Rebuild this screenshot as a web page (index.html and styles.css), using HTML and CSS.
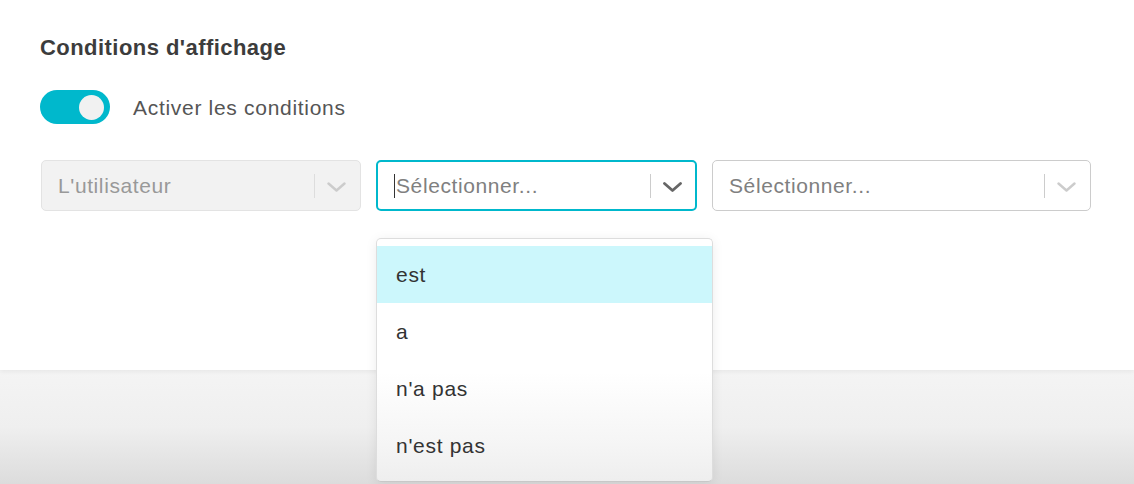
FILE: index.html
```html
<!DOCTYPE html>
<html lang="fr">
<head>
<meta charset="utf-8">
<title>Conditions d'affichage</title>
<link rel="stylesheet" href="styles.css">
</head>
<body>
<div class="panel">
  <h2 class="title">Conditions d'affichage</h2>
  <div class="toggle-row">
    <span class="toggle"><span class="knob"></span></span>
    <span class="toggle-label">Activer les conditions</span>
  </div>
  <div class="selects">
    <div class="select disabled">
      <span class="value">L'utilisateur</span>
      <span class="sep"></span>
      <span class="chev"><svg width="19" height="10" viewBox="0 0 19 10"><polyline points="1.5,1.5 9.5,8.5 17.5,1.5" fill="none" stroke="currentColor" stroke-width="2.4" stroke-linecap="round" stroke-linejoin="round"/></svg></span>
    </div>
    <div class="select-wrap">
      <div class="select focused">
        <span class="value"><span class="caret"></span>Sélectionner...</span>
        <span class="sep"></span>
        <span class="chev"><svg width="19" height="10" viewBox="0 0 19 10"><polyline points="1.5,1.5 9.5,8.5 17.5,1.5" fill="none" stroke="currentColor" stroke-width="2.8" stroke-linecap="round" stroke-linejoin="round"/></svg></span>
      </div>
      <div class="menu">
        <div class="option active">est</div>
        <div class="option">a</div>
        <div class="option">n'a pas</div>
        <div class="option">n'est pas</div>
      </div>
    </div>
    <div class="select">
      <span class="value">Sélectionner...</span>
      <span class="sep"></span>
      <span class="chev"><svg width="19" height="10" viewBox="0 0 19 10"><polyline points="1.5,1.5 9.5,8.5 17.5,1.5" fill="none" stroke="currentColor" stroke-width="2.4" stroke-linecap="round" stroke-linejoin="round"/></svg></span>
    </div>
  </div>
</div>
<div class="footer"></div>
</body>
</html>
```
FILE: styles.css
```css
* { box-sizing: border-box; }
html, body {
  margin: 0;
  padding: 0;
  width: 1134px;
  height: 484px;
  overflow: hidden;
  background: #ffffff;
  font-family: "Liberation Sans", Arial, Helvetica, sans-serif;
}
.panel {
  position: relative;
  z-index: 2;
  height: 370px;
  padding: 36px 0 0 40px;
  background: #ffffff;
  box-shadow: 0 2px 4px rgba(0, 0, 0, 0.05);
}
.title {
  margin: 0;
  font-size: 22px;
  line-height: 24px;
  font-weight: bold;
  letter-spacing: 0.45px;
  color: #3c3c3c;
}
.toggle-row {
  display: flex;
  align-items: center;
  margin-top: 30px;
  height: 34px;
}
.toggle {
  display: flex;
  align-items: center;
  justify-content: flex-end;
  width: 70px;
  height: 34px;
  padding-right: 6px;
  border-radius: 17px;
  background: #00b8cc;
}
.knob {
  width: 25px;
  height: 25px;
  border-radius: 50%;
  background: #f1f1f1;
}
.toggle-label {
  margin-left: 23px;
  font-size: 21px;
  letter-spacing: 0.7px;
  color: #555555;
  padding-top: 2px;
}
.selects {
  display: grid;
  grid-template-columns: 320px 321px 379px;
  column-gap: 15px;
  margin-top: 36px;
  padding-left: 1px;
}
.select-wrap { position: relative; }
.select {
  display: flex;
  align-items: center;
  height: 51px;
  padding-left: 16px;
  border: 1px solid #cccccc;
  border-radius: 5px;
  background: #ffffff;
  font-size: 21px;
  letter-spacing: 0.6px;
}
.select .value {
  flex: 1;
  display: flex;
  align-items: center;
  color: #808080;
  padding-top: 1px;
}
.select .sep {
  width: 1px;
  height: 24px;
  background: #cccccc;
}
.select .chev {
  display: flex;
  align-items: center;
  padding: 2px 14px 0 12px;
  color: #cccccc;
}
.select.disabled {
  background: #f2f2f2;
  border-color: #e3e3e3;
}
.select.disabled .value { color: #999999; }
.select.disabled .sep { background: #dddddd; }
.select.focused {
  border: 2px solid #00b8cc;
  padding-left: 16px;
}
.select.focused .chev {
  color: #666666;
  padding-right: 13px;
}
.caret {
  display: inline-block;
  width: 1px;
  height: 24px;
  margin-right: 1px;
  background: #333333;
}
.menu {
  position: absolute;
  top: 78px;
  left: 0;
  width: 337px;
  padding: 7px 0;
  border: 1px solid #dddddd;
  border-bottom-color: #c8c8c8;
  border-radius: 5px;
  background: linear-gradient(to bottom, #ffffff 0%, #ffffff 55%, #f5f5f5 85%, #eeeeee 100%);
  box-shadow: 0 2px 12px rgba(0, 0, 0, 0.08);
  z-index: 5;
}
.option {
  height: 57px;
  display: flex;
  align-items: center;
  padding-left: 19px;
  font-size: 21px;
  letter-spacing: 0.7px;
  color: #333333;
}
.option.active { background: #ccf7fc; }
.footer {
  height: 114px;
  background: linear-gradient(to bottom, #f4f4f4 0%, #efefef 50%, #dcdcdc 100%);
}
```
